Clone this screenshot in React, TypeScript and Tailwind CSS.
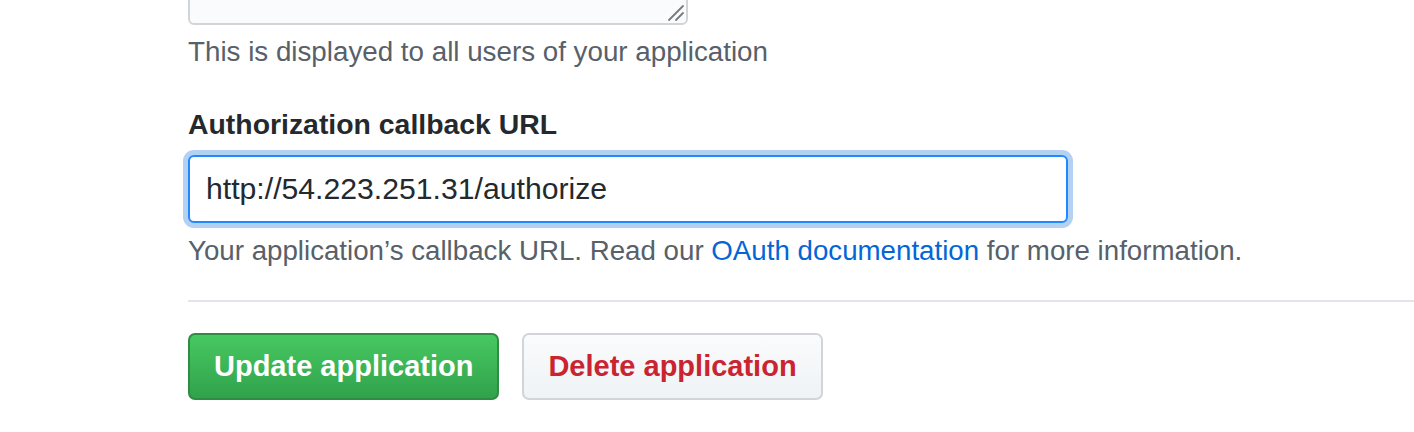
import React from "react";

export default function App() {
  return (
    <div
      className="w-[1414px] h-[432px] overflow-hidden bg-white pl-[188px]"
      style={{ fontFamily: '"Liberation Sans", Arial, sans-serif' }}
    >
      {/* Description textarea (scrolled) */}
      <div className="relative -mt-[41px] h-[66px] w-[500px] rounded-[6px] border-2 border-[#d1d5da] bg-[#fafbfc]">
        <svg
          className="absolute right-[1px] bottom-[1px]"
          width="18"
          height="18"
          viewBox="0 0 18 18"
        >
          <line x1="16" y1="2" x2="2" y2="16" stroke="#7a7a7a" strokeWidth="1.8" strokeLinecap="round" />
          <line x1="16" y1="9" x2="9" y2="16" stroke="#7a7a7a" strokeWidth="1.8" strokeLinecap="round" />
        </svg>
      </div>
      <p className="mt-[9px] text-[27.75px] leading-[36px] text-[#586069]">
        This is displayed to all users of your application
      </p>

      {/* Callback URL */}
      <label className="mt-[36px] block text-[28.4px] leading-[36px] font-bold text-[#24292e]">
        Authorization callback URL
      </label>
      <input
        readOnly
        value="http://54.223.251.31/authorize"
        className="mt-[13px] block h-[68px] w-[880px] rounded-[6px] border-2 border-[#2188ff] bg-white px-[16px] text-[30.2px] text-[#24292e] outline-none shadow-[0_0_0_5px_rgba(3,102,214,0.3)]"
        style={{ fontFamily: '"Liberation Sans", Arial, sans-serif' }}
      />
      <p className="mt-[10px] text-[27.7px] leading-[36px] text-[#586069]">
        Your application’s callback URL. Read our{" "}
        <a className="text-[#0366d6]">OAuth documentation</a> for more information.
      </p>

      <div className="mt-[31px] h-[2px] bg-[#e1e4e8]" />

      {/* Actions */}
      <div className="mt-[31px] flex">
        <button className="h-[67px] rounded-[7px] border-2 border-[#2e8c44] bg-gradient-to-b from-[#47c862] to-[#31a24b] px-[24px] text-[29px] font-bold text-white">
          Update application
        </button>
        <button className="ml-[23px] h-[67px] rounded-[7px] border-2 border-[#d1d5da] bg-gradient-to-b from-[#fafbfc] to-[#eff3f6] px-[24px] text-[29px] font-bold text-[#cb2431]">
          Delete application
        </button>
      </div>
    </div>
  );
}
